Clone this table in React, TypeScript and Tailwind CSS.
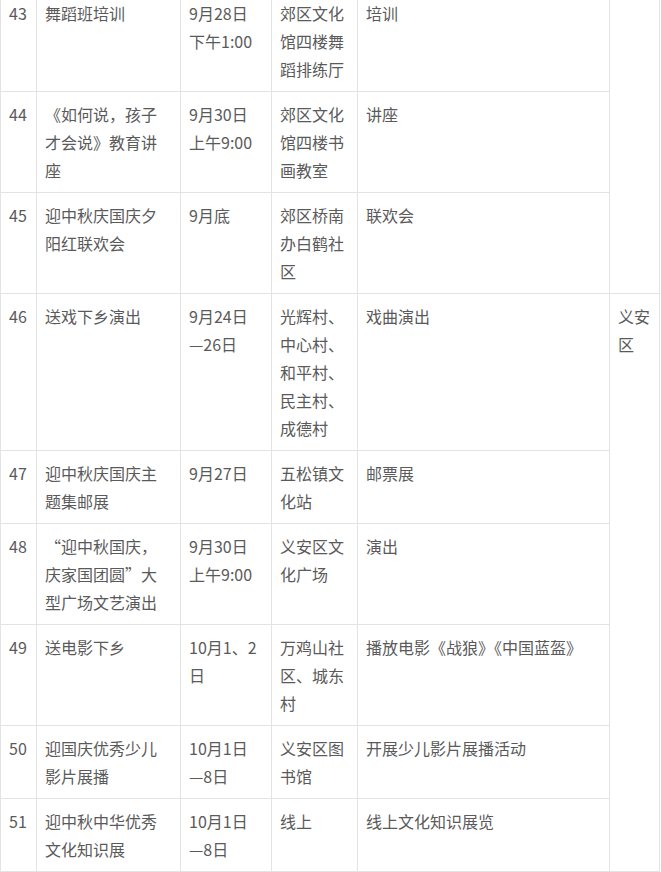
type Row = {
  no: number;
  name: string;
  date: string;
  place: string;
  kind: string;
};

const rows: Row[] = [
  { no: 43, name: "舞蹈班培训", date: "9月28日下午1:00", place: "郊区文化馆四楼舞蹈排练厅", kind: "培训" },
  { no: 44, name: "《如何说，孩子才会说》教育讲座", date: "9月30日上午9:00", place: "郊区文化馆四楼书画教室", kind: "讲座" },
  { no: 45, name: "迎中秋庆国庆夕阳红联欢会", date: "9月底", place: "郊区桥南办白鹤社区", kind: "联欢会" },
  { no: 46, name: "送戏下乡演出", date: "9月24日—26日", place: "光辉村、中心村、和平村、民主村、成德村", kind: "戏曲演出" },
  { no: 47, name: "迎中秋庆国庆主题集邮展", date: "9月27日", place: "五松镇文化站", kind: "邮票展" },
  { no: 48, name: "“迎中秋国庆，庆家国团圆”大型广场文艺演出", date: "9月30日上午9:00", place: "义安区文化广场", kind: "演出" },
  { no: 49, name: "送电影下乡", date: "10月1、2日", place: "万鸡山社区、城东村", kind: "播放电影《战狼》《中国蓝盔》" },
  { no: 50, name: "迎国庆优秀少儿影片展播", date: "10月1日—8日", place: "义安区图书馆", kind: "开展少儿影片展播活动" },
  { no: 51, name: "迎中秋中华优秀文化知识展", date: "10月1日—8日", place: "线上", kind: "线上文化知识展览" },
];

const td = "border border-[#e3e3e3] px-2 py-2 align-top break-all";

function splitDate(d: string) {
  // keep the time / range on its own line like the source
  const m = d.match(/^(\d+月\d+日)(.+)$/);
  if (m && !d.includes("、")) return [m[1], m[2]];
  return [d];
}

export default function App() {
  return (
    <div
      className="w-[661px] h-[872px] overflow-hidden bg-white text-[#5a5a5a] text-[16px] leading-[28px]"
      style={{ fontFamily: '"Microsoft YaHei", "Noto Sans CJK SC", sans-serif' }}
    >
      <table className="mt-[-10px] w-[659px] table-fixed border-collapse">
        <colgroup>
          <col className="w-[36px]" />
          <col className="w-[144px]" />
          <col className="w-[91px]" />
          <col className="w-[86px]" />
          <col className="w-[252px]" />
          <col className="w-[50px]" />
        </colgroup>
        <tbody>
          {rows.map((r, i) => (
            <tr key={r.no}>
              <td className={td}>{r.no}</td>
              <td className={td}>{r.name}</td>
              <td className={td}>
                {splitDate(r.date).map((p, j) => (
                  <div key={j}>{p}</div>
                ))}
              </td>
              <td className={td}>{r.place}</td>
              <td className={td}>{r.kind}</td>
              {i === 0 && <td className={td} rowSpan={3} />}
              {i === 3 && (
                <td className={td} rowSpan={6}>
                  义安区
                </td>
              )}
            </tr>
          ))}
        </tbody>
      </table>
    </div>
  );
}
